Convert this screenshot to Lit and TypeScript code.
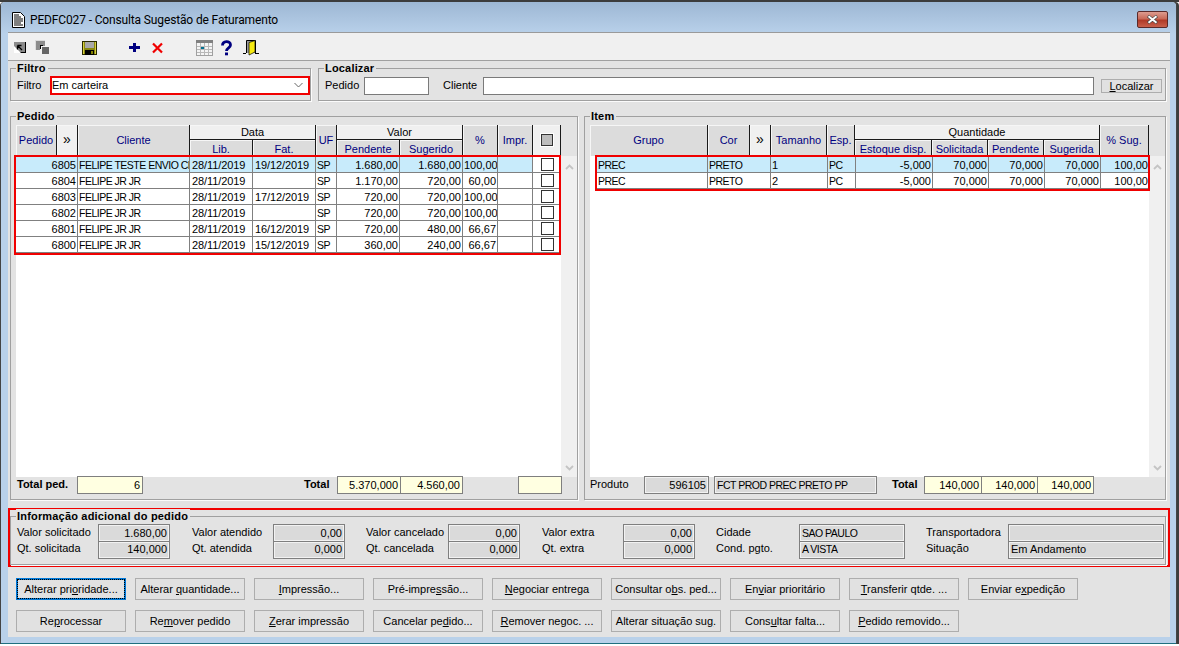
import { LitElement, html, css, svg } from "lit";
import { customElement } from "lit/decorators.js";

const pedidos = [
  ["6805", "FELIPE TESTE ENVIO CLIENTE", "28/11/2019", "19/12/2019", "SP", "1.680,00", "1.680,00", "100,00"],
  ["6804", "FELIPE JR JR", "28/11/2019", "", "SP", "1.170,00", "720,00", "60,00"],
  ["6803", "FELIPE JR JR", "28/11/2019", "17/12/2019", "SP", "720,00", "720,00", "100,00"],
  ["6802", "FELIPE JR JR", "28/11/2019", "", "SP", "720,00", "720,00", "100,00"],
  ["6801", "FELIPE JR JR", "28/11/2019", "16/12/2019", "SP", "720,00", "480,00", "66,67"],
  ["6800", "FELIPE JR JR", "28/11/2019", "15/12/2019", "SP", "360,00", "240,00", "66,67"],
];
const itens = [
  ["PREC", "PRETO", "1", "PC", "-5,000", "70,000", "70,000", "70,000", "100,00"],
  ["PREC", "PRETO", "2", "PC", "-5,000", "70,000", "70,000", "70,000", "100,00"],
];
const info = [
  [["Valor solicitado", "1.680,00"], ["Valor atendido", "0,00"], ["Valor cancelado", "0,00"], ["Valor extra", "0,00"], ["Cidade", "SAO PAULO"], ["Transportadora", ""]],
  [["Qt. solicitada", "140,000"], ["Qt. atendida", "0,000"], ["Qt. cancelada", "0,000"], ["Qt. extra", "0,000"], ["Cond. pgto.", "A VISTA"], ["Situação", "Em Andamento"]],
];
const botoes = [
  [["Alterar pri", "o", "ridade..."], ["Alterar ", "q", "uantidade..."], ["", "I", "mpressão..."], ["Pré-impre", "s", "são..."], ["", "N", "egociar entrega"], ["Consultar o", "b", "s. ped..."], ["En", "v", "iar prioritário"], ["", "T", "ransferir qtde. ..."], ["Enviar e", "x", "pedição"]],
  [["Re", "p", "rocessar"], ["Re", "m", "over pedido"], ["", "Z", "erar impressão"], ["Cancelar pe", "d", "ido..."], ["", "R", "emover negoc. ..."], ["Alterar situação su", "g", "."], ["Cons", "u", "ltar falta..."], ["", "P", "edido removido..."]],
];

const icons = [
  svg`<svg class="ic i1" width="13" height="20" viewBox="0 0 13 20"><rect x="1" y="4" width="12" height="11" fill="#000"/><rect x="1" y="4" width="11" height="10" fill="#8a8a8a"/><path d="M1 8v7h7z" fill="#fff"/><path d="M9 11L4.500 6.500M4.500 6.500h4M4.500 6.500v4" stroke="#000" stroke-width="1.300" fill="none" transform="translate(0 1)"/></svg>`,
  svg`<svg class="ic i2" width="14" height="20" viewBox="0 0 14 20"><rect x="0" y="2" width="10" height="10" fill="#8c8c8c"/><path d="M0 2h10v1H1v9H0z" fill="#dcdcdc"/><rect x="5" y="8" width="9" height="8" fill="#f4f4f4"/><rect x="7" y="9" width="7" height="7" fill="#666"/><path d="M5 7h3v1H5z" fill="#000"/><path d="M5 8h1v3H5z" fill="#000"/></svg>`,
  svg`<svg class="ic i3" width="15" height="20" viewBox="0 0 15 20"><rect x="0" y="3" width="15" height="14" fill="#2a2a00"/><rect x="1" y="4" width="13" height="12" fill="#8a8a10"/><rect x="3" y="4" width="9" height="6" fill="#a8a8a8"/><rect x="3" y="12" width="9" height="5" fill="#000"/><rect x="9" y="13" width="2" height="3" fill="#808000"/><path d="M1 4h1v12H1zM13 4h1v12h-1z" fill="#d8d040"/></svg>`,
  svg`<svg class="ic i4" width="11" height="20" viewBox="0 0 11 20"><path d="M4 5h3v3h4v3H7v3H4v-3H0V8h4z" fill="#000080"/></svg>`,
  svg`<svg class="ic i5" width="11" height="20" viewBox="0 0 11 20"><path d="M1 5.500L10 14.500M10 5.500L1 14.500" stroke="#f00000" stroke-width="2.200"/></svg>`,
  svg`<svg class="ic i6" width="17" height="20" viewBox="0 0 17 20"><rect x="0.5" y="2.500" width="16" height="15" fill="#f4f4f4" stroke="#a0a0a0"/><rect x="0" y="2" width="17" height="3" fill="#808080"/><path d="M4.500 5v12M8.500 5v12M12.500 5v12M1 8.500h15M1 11.500h15M1 14.500h15" stroke="#b8b8b8"/><rect x="5" y="9" width="3" height="2" fill="#007090"/></svg>`,
  svg`<svg class="ic i7" width="13" height="20" viewBox="0 0 13 20"><path d="M2.500 7.500C2.500 2.500 10.500 2.500 10.500 7C10.500 9.800 6.500 9.800 6.500 13" stroke="#000080" stroke-width="2.800" fill="none"/><rect x="5" y="14.500" width="3" height="2.800" fill="#000080"/></svg>`,
  svg`<svg class="ic i8" width="16" height="20" viewBox="0 0 16 20"><path d="M0 15.500h3M12 15.500h4" stroke="#000"/><path d="M3.500 15V2.500h9V15" fill="#9a9a9a" stroke="#000"/><path d="M6 4.500l6-2V14l-6 3z" fill="#f6ea10" stroke="#000" stroke-width=".7"/></svg>`,
];

@customElement("app-root")
export class AppRoot extends LitElement {
  static styles = css`
    :host { display: block; width: 1179px; height: 646px; overflow: hidden; background: #fff;
      font: 11px "Liberation Sans", Arial, sans-serif; color: #000; }
    .top { height: 2px; background: #3c3c3c; }
    .window { width: 1175px; height: 642px; margin-left: 1px; box-sizing: border-box; border-bottom: 1px solid #1f6f80; border-radius: 4px 4px 0 0;
      background: linear-gradient(#9db7d4 0, #b9d1ea 32px); box-shadow: -1px 0 0 #444, 1px 0 0 #444, 3px 0 0 #3c3c3c; }
    .title { height: 30px; display: flex; align-items: center; box-sizing: border-box; padding: 5px 8px 0 11px; }
    .title-text { margin-left: 5px; font: 12px Roboto, "Noto Sans", sans-serif; letter-spacing: -.14px; color: #000; }
    .close { margin-left: auto; width: 31px; height: 17px; box-sizing: border-box; border: 1px solid #5a2a2a; border-radius: 2px;
      background: linear-gradient(#dd9c90 0, #c96a58 45%, #b03a28 55%, #c8604c 100%); display: flex; align-items: center; justify-content: center; }
    .client { width: 1162px; height: 605px; margin-left: 7px; box-sizing: border-box; background: #e3e3e3; border-top: 1px solid #9a9a9a; }
    .toolbar { height: 28px; box-sizing: border-box; background: #f0f0f0; border-bottom: 1px solid #a0a0a0; display: flex; align-items: flex-start; padding-top: 5px; }
    .ic { flex: none; display: block; }
    .i1 { margin-left: 5px; } .i2 { margin-left: 9px; } .i3 { margin-left: 33px; } .i4 { margin-left: 32px; }
    .i5 { margin-left: 12px; } .i6 { margin-left: 33px; } .i7 { margin-left: 7px; } .i8 { margin-left: 10px; }

    .group { border: 1px solid #a0a0a0; box-shadow: 1px 1px 0 #fbfbfb; box-sizing: border-box; }
    .legend { display: table; margin: -8px 0 0 5px; padding: 0 2px 0 1px; background: #e3e3e3; font-weight: bold; line-height: 15px; height: 15px; letter-spacing: .18px; }
    .filter-row { display: flex; margin: 7px 0 0 2px; }
    .g-filtro { width: 301px; height: 33px; }
    .g-local { width: 848px; height: 33px; margin-left: 7px; }
    .line { display: flex; align-items: center; padding-left: 6px; height: 19px; }
    .line > span { padding-bottom: 2px; }
    .l-filtro { width: 33px; }
    .combo { width: 260px; height: 19px; box-sizing: border-box; border: 2px solid #f00000; background: #fff; display: flex; align-items: center; justify-content: space-between; padding: 0 5px 2px 0; }
    .l-ped { width: 39px; }
    .l-cli { width: 40px; margin-left: 14px; }
    .inp { height: 18px; box-sizing: border-box; border: 1px solid #7a7a7a; background: #fff; }
    .w65 { width: 65px; } .w611 { width: 611px; }
    .btn-s { width: 61px; height: 14px; margin-left: 7px; box-sizing: border-box; border: 1px solid #adadad; background: #e1e1e1; text-align: center; line-height: 12px; }
    u { text-decoration: underline; text-underline-offset: 1px; }

    .main { display: flex; margin: 15px 0 0 2px; }
    .g-ped { width: 568px; height: 384px; }
    .g-item { width: 582px; height: 384px; margin-left: 6px; }
    .tbl { margin-left: 5px; margin-top: 1px; }
    .head { display: grid; grid-template-rows: 15px 16px; }
    .h-ped { grid-template-columns: 41px 21px 112px 63px 63px 21px 63px 63px 35px 35px 28px; }
    .h-item { grid-template-columns: 118px 42px 21px 56px 28px 77px 56px 56px 56px 49px; }
    .hc { background: #dcdcdc; border-right: 1px solid #1a1a1a; box-shadow: inset 1px 1px 0 #f6f6f6; display: flex; align-items: center; justify-content: center; color: #000080; white-space: nowrap; overflow: hidden; line-height: 14px; min-width: 0; box-sizing: border-box; }
    .rs { grid-row: span 2; padding-bottom: 2px; }
    .cs2 { grid-column: span 2; }
    .cs4 { grid-column: span 4; }
    .lt { background: #f0f0f0; color: #000; }
    .arrow { font-size: 14px; padding-bottom: 3px; }
    .grp { border-bottom: 1px solid #1a1a1a; }
    .sub { padding-top: 2px; border-bottom: 1px solid #9a9a9a; }
    .hbox { width: 10px; height: 10px; background: #bdbdbd; border: 1px solid #333; box-shadow: 0 0 0 1px #fff; }
    .body-wrap { display: flex; position: relative; }
    .list { background: #fff; height: 321px; box-sizing: border-box; padding-top: 1px; }
    .list-ped { width: 545px; }
    .list-item { width: 559px; padding-left: 7px; }
    .row { display: grid; height: 16px; box-sizing: border-box; border-bottom: 1px solid #808080; }
    .r-ped { grid-template-columns: 62px 112px 63px 63px 21px 63px 63px 35px 35px 28px; }
    .r-item { grid-template-columns: 111px 63px 57px 28px 77px 56px 56px 56px 49px; }
    .sel .c:not(.chk) { background: #c8ebfb; }
    .c { border-right: 1px solid #808080; padding: 0 1px 0 1px; line-height: 17px; height: 15px; white-space: nowrap; overflow: hidden; min-width: 0; }
    .r { text-align: right; }
    .cp { font-size: 10.5px; letter-spacing: -.5px; }
    .dt { letter-spacing: -.1px; padding-left: 2px; }
    .c.chk { display: flex; align-items: flex-start; justify-content: center; padding: 1px 0 0 0; border-right: 0; box-sizing: border-box; }
    .cb { width: 13px; height: 13px; box-sizing: border-box; border: 1px solid #333; background: #fff; display: block; }
    .sb { width: 16px; background: #f0f0f0; height: 321px; display: flex; flex-direction: column; justify-content: space-between; align-items: center; padding: 8px 0 6px; box-sizing: border-box; }
    .mark { position: absolute; box-sizing: border-box; border: 2px solid #f00000; pointer-events: none; }
    .m-ped { left: -2px; top: -1px; width: 547px; height: 100px; }
    .m-item { left: 5px; top: -1px; width: 555px; height: 36px; }
    .foot { display: grid; align-items: center; margin: -1px 0 0 5px; height: 18px; position: relative; }
    .f-ped { grid-template-columns: 61px 65px 162px 33px 63px 63px 55px 44px; }
    .f-item { grid-template-columns: 54px 65px 5px 163px 15px 32px 57px 56px 57px; }
    .lbl-b { font-weight: bold; padding: 0 0 2px 1px; }
    .tot { padding-left: 0; }
    .lbl { padding-bottom: 2px; }
    .yel, .ro { height: 18px; box-sizing: border-box; border: 1px solid #7f7f7f; line-height: 17px; padding: 0 2px; white-space: nowrap; overflow: hidden; }
    .yel { background: #ffffe1; text-align: right; margin-right: -1px; }
    .yel.end { margin-right: 0; }
    .ro { background: #dadada; box-shadow: inset 0 0 0 1px #f2f2f2; }
    .ro.r { text-align: right; }

    .info-wrap { margin-top: 8px; border: 2px solid #f00000; padding: 6px 2px 0 0; height: 59px; box-sizing: border-box; }
    .g-info { height: 49px; }
    .info-grid { display: grid; margin-left: 6px; grid-template-rows: 17px 17px;
      grid-template-columns: 81px 72px 22px 81px 72px 21px 82px 72px 22px 81px 72px 21px 83px 106px 21px 82px 156px; }
    .info-l { line-height: 16px; white-space: nowrap; }
    .row2 { line-height: 14px; }
    .info-v { height: 18px; line-height: 16px; }
    .info-v.row2 { line-height: 15px; }
    .buttons { display: grid; grid-template-columns: repeat(9, 110px); grid-auto-rows: 22px; gap: 10px 9px; margin: 11px 0 0 8px; }
    .b { box-sizing: border-box; border: 1px solid #adadad; background: #e1e1e1; display: flex; align-items: center; justify-content: center; white-space: nowrap; }
    .b.focus { border: 2px solid #0078d7; }
    .b.focus span { outline: 1px dotted #000; padding: 3px 4px; width: 100%; box-sizing: border-box; text-align: center; }
  `;

  private chevron(up: boolean) {
    return svg`<svg width="9" height="6" viewBox="0 0 9 6"><path d="${up ? "M1 5L4.500 1.500L8 5" : "M1 1L4.500 4.500L8 1"}" fill="none" stroke="#c4c4c4" stroke-width="1.800"/></svg>`;
  }

  render() {
    return html`
      <div class="top"></div>
      <div class="window">
        <div class="title">
          <svg width="13" height="16" viewBox="0 0 13 16"><path d="M.5.500h8l4 4v11H.5z" fill="#fff" stroke="#000"/><path d="M2 3h5M2 5h7M2 7h9M2 9h9M2 11h7M2 13h9" stroke="#000"/></svg>
          <span class="title-text">PEDFC027 - Consulta Sugestão de Faturamento</span>
          <div class="close"><svg width="13" height="9" viewBox="0 0 13 9"><path d="M2 1L11 8M11 1L2 8" stroke="#444" stroke-width="3.200"/><path d="M2.500 1.200L10.500 7.800M10.500 1.200L2.500 7.800" stroke="#fff" stroke-width="2"/></svg></div>
        </div>
        <div class="client">
          <div class="toolbar">${icons}</div>
          <div class="filter-row">
            <div class="group g-filtro">
              <div class="legend">Filtro</div>
              <div class="line"><span class="l-filtro">Filtro</span>
                <div class="combo"><span>Em carteira</span><svg width="9" height="6" viewBox="0 0 9 6"><path d="M.5 1L4.500 5L8.500 1" fill="none" stroke="#666"/></svg></div>
              </div>
            </div>
            <div class="group g-local">
              <div class="legend">Localizar</div>
              <div class="line">
                <span class="l-ped">Pedido</span><div class="inp w65"></div>
                <span class="l-cli">Cliente</span><div class="inp w611"></div>
                <div class="btn-s"><u>L</u>ocalizar</div>
              </div>
            </div>
          </div>
          <div class="main">
            <div class="group g-ped">
              <div class="legend">Pedido</div>
              <div class="tbl">
                <div class="head h-ped">
                  <div class="hc rs">Pedido</div><div class="hc rs lt arrow">»</div><div class="hc rs">Cliente</div>
                  <div class="hc cs2 lt grp">Data</div><div class="hc rs">UF</div><div class="hc cs2 lt grp">Valor</div>
                  <div class="hc rs">%</div><div class="hc rs">Impr.</div><div class="hc rs lt"><div class="hbox"></div></div>
                  <div class="hc sub">Lib.</div><div class="hc sub">Fat.</div><div class="hc sub">Pendente</div><div class="hc sub">Sugerido</div>
                </div>
                <div class="body-wrap">
                  <div class="list list-ped">
                    ${pedidos.map((p, i) => html`<div class="row r-ped ${i === 0 ? "sel" : ""}">
                      <div class="c r">${p[0]}</div><div class="c cp">${p[1]}</div><div class="c dt">${p[2]}</div><div class="c dt">${p[3]}</div><div class="c cp">${p[4]}</div>
                      <div class="c r">${p[5]}</div><div class="c r">${p[6]}</div><div class="c r">${p[7]}</div><div class="c"></div>
                      <div class="c chk"><span class="cb"></span></div></div>`)}
                  </div>
                  <div class="sb">${this.chevron(true)}${this.chevron(false)}</div>
                  <div class="mark m-ped"></div>
                </div>
              </div>
              <div class="foot f-ped">
                <span class="lbl-b">Total ped.</span><div class="yel">6</div><i></i><span class="lbl-b tot">Total</span>
                <div class="yel">5.370,000</div><div class="yel end">4.560,00</div><i></i><div class="yel end"></div>
              </div>
            </div>
            <div class="group g-item">
              <div class="legend">Item</div>
              <div class="tbl">
                <div class="head h-item">
                  <div class="hc rs">Grupo</div><div class="hc rs">Cor</div><div class="hc rs lt arrow">»</div><div class="hc rs">Tamanho</div><div class="hc rs">Esp.</div>
                  <div class="hc cs4 lt grp">Quantidade</div><div class="hc rs">% Sug.</div>
                  <div class="hc sub">Estoque disp.</div><div class="hc sub">Solicitada</div><div class="hc sub">Pendente</div><div class="hc sub">Sugerida</div>
                </div>
                <div class="body-wrap">
                  <div class="list list-item">
                    ${itens.map((p, i) => html`<div class="row r-item ${i === 0 ? "sel" : ""}">
                      <div class="c cp">${p[0]}</div><div class="c cp">${p[1]}</div><div class="c">${p[2]}</div><div class="c cp">${p[3]}</div>
                      <div class="c r">${p[4]}</div><div class="c r">${p[5]}</div><div class="c r">${p[6]}</div><div class="c r">${p[7]}</div><div class="c r">${p[8]}</div></div>`)}
                  </div>
                  <div class="sb">${this.chevron(true)}${this.chevron(false)}</div>
                  <div class="mark m-item"></div>
                </div>
              </div>
              <div class="foot f-item">
                <span class="lbl">Produto</span><div class="ro r">596105</div><i></i><div class="ro cp">FCT PROD PREC PRETO PP</div><i></i><span class="lbl-b tot">Total</span>
                <div class="yel">140,000</div><div class="yel">140,000</div><div class="yel end">140,000</div>
              </div>
            </div>
          </div>
          <div class="info-wrap">
            <div class="group g-info">
              <div class="legend">Informação adicional do pedido</div>
              <div class="info-grid">
                ${info.map((row, ri) => row.map(([l, v], i) => html`
                  ${i > 0 ? html`<i></i>` : ""}
                  <div class="info-l ${ri ? "row2" : ""}">${l}</div>
                  <div class="ro info-v ${i < 4 ? "r" : ""} ${i === 4 ? "cp" : ""} ${ri ? "row2" : ""}">${v}</div>`))}
              </div>
            </div>
          </div>
          <div class="buttons">
            ${botoes.map((row, ri) => row.map(([a, u, b], i) => html`<div class="b ${ri === 0 && i === 0 ? "focus" : ""}"><span>${a}<u>${u}</u>${b}</span></div>`))}
          </div>
        </div>
      </div>
    `;
  }
}
